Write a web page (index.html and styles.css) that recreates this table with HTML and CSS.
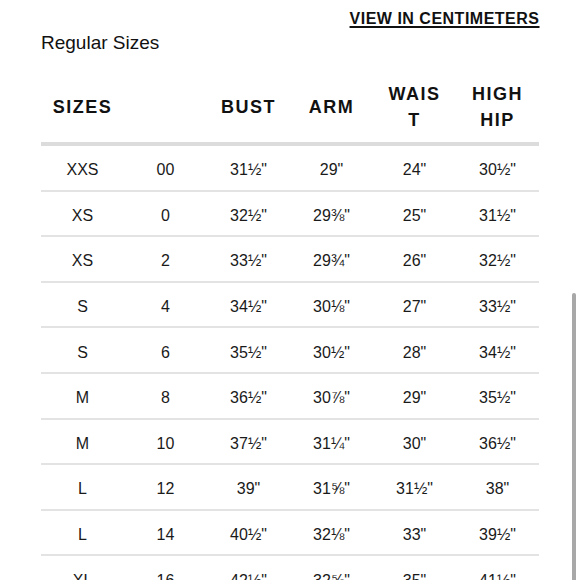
FILE: index.html
```html
<!DOCTYPE html>
<html>
<head>
<meta charset="utf-8">
<link rel="stylesheet" href="styles.css">
</head>
<body>
<div class="page">
  <div class="topbar"><a class="cm-link" href="#">VIEW IN CENTIMETERS</a></div>
  <h2 class="title">Regular Sizes</h2>
  <div class="chart">
    <div class="row head">
      <div class="cell">SIZES</div>
      <div class="cell"></div>
      <div class="cell">BUST</div>
      <div class="cell">ARM</div>
      <div class="cell">WAIST</div>
      <div class="cell">HIGH HIP</div>
    </div>
    <div class="row"><div class="cell">XXS</div><div class="cell">00</div><div class="cell">31½"</div><div class="cell">29"</div><div class="cell">24"</div><div class="cell">30½"</div></div>
    <div class="row"><div class="cell">XS</div><div class="cell">0</div><div class="cell">32½"</div><div class="cell">29⅜"</div><div class="cell">25"</div><div class="cell">31½"</div></div>
    <div class="row"><div class="cell">XS</div><div class="cell">2</div><div class="cell">33½"</div><div class="cell">29¾"</div><div class="cell">26"</div><div class="cell">32½"</div></div>
    <div class="row"><div class="cell">S</div><div class="cell">4</div><div class="cell">34½"</div><div class="cell">30⅛"</div><div class="cell">27"</div><div class="cell">33½"</div></div>
    <div class="row"><div class="cell">S</div><div class="cell">6</div><div class="cell">35½"</div><div class="cell">30½"</div><div class="cell">28"</div><div class="cell">34½"</div></div>
    <div class="row"><div class="cell">M</div><div class="cell">8</div><div class="cell">36½"</div><div class="cell">30⅞"</div><div class="cell">29"</div><div class="cell">35½"</div></div>
    <div class="row"><div class="cell">M</div><div class="cell">10</div><div class="cell">37½"</div><div class="cell">31¼"</div><div class="cell">30"</div><div class="cell">36½"</div></div>
    <div class="row"><div class="cell">L</div><div class="cell">12</div><div class="cell">39"</div><div class="cell">31⅝"</div><div class="cell">31½"</div><div class="cell">38"</div></div>
    <div class="row"><div class="cell">L</div><div class="cell">14</div><div class="cell">40½"</div><div class="cell">32⅛"</div><div class="cell">33"</div><div class="cell">39½"</div></div>
    <div class="row"><div class="cell">XL</div><div class="cell">16</div><div class="cell">42½"</div><div class="cell">32⅝"</div><div class="cell">35"</div><div class="cell">41½"</div></div>
  </div>
</div>
<div class="scrollbar"></div>
</body>
</html>
```

FILE: styles.css
```css
html, body {
  margin: 0;
  padding: 0;
  background: #fff;
  overflow: hidden;
}
body {
  font-family: "Liberation Sans", Arial, sans-serif;
  color: #111;
  width: 580px;
  height: 580px;
  position: relative;
}
.page {
  padding: 10px 41px 0 41px;
}
.topbar {
  display: flex;
  justify-content: flex-end;
  line-height: 18px;
}
.cm-link {
  font-size: 16px;
  font-weight: bold;
  letter-spacing: 0.5px;
  margin-right: -0.5px;
  color: #111;
  text-decoration: underline;
  text-decoration-thickness: 1.5px;
  text-underline-offset: 1.5px;
}
.title {
  margin: 4px 0 0 0;
  font-size: 19px;
  font-weight: normal;
  line-height: 22px;
  color: #111;
}
.chart {
  margin-top: 14px;
}
.row {
  display: grid;
  grid-template-columns: repeat(6, 1fr);
  height: 43.6px;
  border-bottom: 2px solid #e3e3e3;
  align-items: center;
}
.row.head {
  height: 74px;
  border-bottom: 4px solid #dcdcdc;
}
.cell {
  text-align: center;
  font-size: 16px;
  color: #1a1a1a;
  padding-top: 5px;
}
.head .cell {
  font-size: 18px;
  font-weight: bold;
  letter-spacing: 1.5px;
  line-height: 26.5px;
  color: #111;
  padding: 4px 11px 0 11px;
  word-break: break-all;
}
.scrollbar {
  position: absolute;
  right: 4px;
  top: 293px;
  width: 4px;
  height: 300px;
  background: #a8a8a8;
  border-radius: 2px;
}
```
